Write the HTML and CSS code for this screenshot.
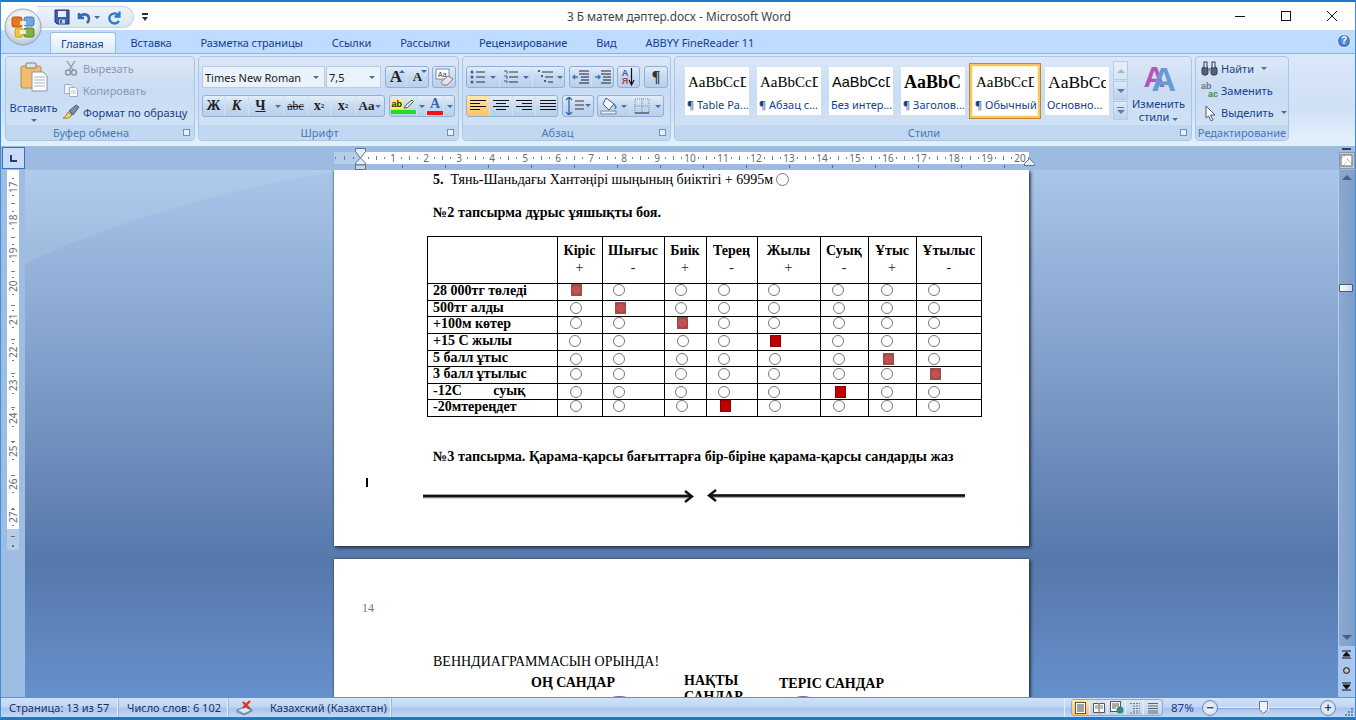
FILE: index.html
```html
<!DOCTYPE html>
<html lang="ru">
<head>
<meta charset="utf-8">
<title>3 Б матем дәптер.docx - Microsoft Word</title>
<link rel="stylesheet" href="styles.css">
</head>
<body>
<div class="app">
  <header class="titlebar">
    <div class="office-btn">
      <svg width="38" height="38" viewBox="0 0 38 38">
        <defs><radialGradient id="pearl" cx=".5" cy=".35" r=".7"><stop offset="0" stop-color="#fff"/><stop offset=".6" stop-color="#e3e9f1"/><stop offset="1" stop-color="#aab6c6"/></radialGradient></defs>
        <circle cx="19" cy="19" r="18" fill="url(#pearl)" stroke="#93a2b6"/>
        <rect x="8" y="9" width="10" height="10" rx="2" fill="#e8761c" stroke="#b94f10"/>
        <rect x="20" y="9" width="10" height="9" rx="2" fill="#6fa8dc" stroke="#3f77b5"/>
        <rect x="11" y="20" width="8" height="9" rx="2" fill="#f3c548" stroke="#cf9a1c"/>
        <rect x="20" y="20" width="10" height="9" rx="2" fill="#7fb04a" stroke="#4e8427"/>
        <rect x="16" y="13" width="6" height="4" fill="#fff" opacity=".8"/>
        <rect x="16" y="22" width="6" height="4" fill="#fff" opacity=".8"/>
      </svg>
    </div>
    <div class="title-left">
      <div class="qat">
        <svg width="16" height="16" viewBox="0 0 16 16"><path d="M1 1h14v14H3l-2-2z" fill="#3c5da8" stroke="#26397c"/><rect x="4" y="2" width="8" height="6" fill="#e7eefb"/><rect x="5" y="10.500" width="6" height="4" fill="#c8d0dc"/><rect x="6" y="11" width="2" height="3" fill="#3c5da8"/></svg>
        <svg class="qat-undo" width="15" height="15" viewBox="0 0 15 15"><path d="M3 3v5h5M3.500 7.500C6 3 12 3.500 13 8c.3 2-.6 3.500-2 5" fill="none" stroke="#2f6cb5" stroke-width="2.600"/></svg>
        <span class="caret qat-caret"></span>
        <svg class="qat-redo" width="15" height="15" viewBox="0 0 15 15"><path d="M12.500 1.500v5h-5M12 6C10 2.500 5.500 2.500 3.200 5.500 1 9 3.500 13.500 7.500 13.500c2 0 3.500-1 4.500-2.500" fill="none" stroke="#2f7ac5" stroke-width="2.300"/></svg>
      </div>
      <svg class="qat-more" width="7" height="9" viewBox="0 0 7 9"><rect x="0" y="0" width="6" height="2" fill="#20304a"/><path d="M0 4h6L3 8z" fill="#20304a"/></svg>
    </div>
    <div class="title-text">3 Б матем дәптер.docx - Microsoft Word</div>
    <div class="win-btns">
      <svg width="12" height="12" viewBox="0 0 12 12"><path d="M1 6.500h10" stroke="#111" fill="none"/></svg>
      <svg width="12" height="12" viewBox="0 0 12 12"><rect x="1.500" y="1.500" width="9" height="9" fill="none" stroke="#111"/></svg>
      <svg width="12" height="12" viewBox="0 0 12 12"><path d="M1 1l10 10M11 1L1 11" stroke="#111" fill="none"/></svg>
    </div>
  </header>

  <nav class="tabs">
    <span class="tab tab-active">Главная</span>
    <span class="tab">Вставка</span>
    <span class="tab">Разметка страницы</span>
    <span class="tab">Ссылки</span>
    <span class="tab">Рассылки</span>
    <span class="tab">Рецензирование</span>
    <span class="tab">Вид</span>
    <span class="tab">ABBYY FineReader 11</span>
    <span class="help">?</span>
  </nav>

  <section class="ribbon">
    <div class="group g-clip">
      <div class="group-body clip-body">
        <div class="paste">
          <svg width="28" height="30" viewBox="0 0 28 30"><rect x="1" y="4" width="20" height="22" rx="2" fill="#f0bd6c" stroke="#b68a45"/><rect x="6" y="1" width="10" height="5" rx="1" fill="#e3e3e3" stroke="#7b7b7b"/><path d="M12 10h11l4 4v15H12z" fill="#fff" stroke="#8794a8"/><path d="M14 15h11M14 18h11M14 21h11M14 24h11" stroke="#a9b4c4"/></svg>
          <span class="paste-label">Вставить</span>
          <span class="caret"></span>
        </div>
        <div class="clip-list">
          <div class="clip-row muted">
            <svg width="14" height="16" viewBox="0 0 14 16"><path d="M3 1l6 9M11 1L5 10" stroke="#9aa6b6" stroke-width="1.500" fill="none"/><circle cx="4" cy="12.500" r="2.500" fill="none" stroke="#8c99ab" stroke-width="1.500"/><circle cx="10" cy="12.500" r="2.500" fill="none" stroke="#8c99ab" stroke-width="1.500"/></svg>
            <span>Вырезать</span>
          </div>
          <div class="clip-row muted">
            <svg width="16" height="14" viewBox="0 0 16 14"><path d="M1.500 1.500h6l2 2v7h-8z" fill="#eef2f8" stroke="#a4aebd"/><path d="M6.500 4.500h6l2 2v7h-8z" fill="#fff" stroke="#a4aebd"/><path d="M8 8h5M8 10h5" stroke="#b9c2cf"/></svg>
            <span>Копировать</span>
          </div>
          <div class="clip-row">
            <svg width="18" height="16" viewBox="0 0 18 16"><path d="M1 14c3-1 4-4 5-6l4 3c-2 3-5 4-9 3z" fill="#f2d27a" stroke="#9b7d2d"/><path d="M7 7l7-6 3 2-6 8z" fill="#7b8da8" stroke="#4c5b72"/></svg>
            <span>Формат по образцу</span>
          </div>
        </div>
      </div>
      <div class="group-label">Буфер обмена<span class="launcher"></span></div>
    </div>

    <div class="group g-font">
      <div class="group-body rows">
        <div class="tool-row">
          <div class="combo combo-font"><span>Times New Roman</span><span class="caret"></span></div>
          <div class="combo combo-size"><span>7,5</span><span class="caret"></span></div>
          <div class="btn-group grow-group">
            <span class="btn serif-b big-a">A<i class="up"></i></span>
            <span class="btn serif-b small-a">A<i class="down"></i></span>
          </div>
          <div class="btn-group solo clear-btn">
            <svg width="20" height="18" viewBox="0 0 20 18"><rect x="2" y="1" width="13" height="10" fill="#fff" stroke="#7c8ba0"/><text x="4" y="9" class="svg-mini">Aa</text><path d="M7 14l7-6 5 3-6 6H9z" fill="#f3e0e4" stroke="#8b7a80"/></svg>
          </div>
        </div>
        <div class="tool-row row-two">
          <div class="btn-group fmt-group">
            <span class="btn serif-b w22">Ж</span>
            <span class="btn serif-b ital w24">К</span>
            <span class="btn serif-b under w23">Ч</span>
            <span class="btn w12"><span class="caret"></span></span>
            <span class="btn serif strike w24">abc</span>
            <span class="btn serif-b w23">x<sub>2</sub></span>
            <span class="btn serif-b w25">x<sup>2</sup></span>
            <span class="btn serif-b aa">Aa<span class="caret"></span></span>
          </div>
          <div class="btn-group color-group">
            <span class="btn hl">
              <span class="hl-top"><span class="hl-ab">ab</span><svg width="11" height="10" viewBox="0 0 11 10"><path d="M1 9l2-3 6-5 1.500 1.500-6 6z" fill="#f5f5f5" stroke="#555"/></svg></span>
              <span class="bar bar-g"></span>
            </span>
            <span class="btn w10"><span class="caret"></span></span>
            <span class="btn colora"><span class="colora-a">A</span><span class="bar bar-r"></span></span>
            <span class="btn w12"><span class="caret"></span></span>
          </div>
        </div>
      </div>
      <div class="group-label">Шрифт<span class="launcher"></span></div>
    </div>

    <div class="group g-para">
      <div class="group-body rows">
        <div class="tool-row">
          <div class="btn-group list-group">
            <span class="btn w33"><svg width="26" height="14" viewBox="0 0 26 14"><g fill="#3d5d8c"><circle cx="2" cy="2" r="1.500"/><circle cx="2" cy="7" r="1.500"/><circle cx="2" cy="12" r="1.500"/></g><path d="M6 2h9M6 7h9M6 12h9" stroke="#333"/><path d="M20 6h6l-3 3z" fill="#4c6d9c"/></svg></span>
            <span class="btn w33"><svg width="26" height="14" viewBox="0 0 26 14"><path d="M1 1h3v3M1 6h3v3M1 11h3v2" fill="none" stroke="#3d5d8c"/><path d="M6 2h9M6 7h9M6 12h9" stroke="#333"/><path d="M20 6h6l-3 3z" fill="#4c6d9c"/></svg></span>
            <span class="btn w33"><svg width="26" height="14" viewBox="0 0 26 14"><path d="M1 1h2M4 6h2M7 11h2" stroke="#3d5d8c" stroke-width="2"/><path d="M5 2h11M8 7h8M11 12h5" stroke="#333"/><path d="M20 6h6l-3 3z" fill="#4c6d9c"/></svg></span>
          </div>
          <div class="btn-group indent-group">
            <span class="btn w22"><svg width="18" height="14" viewBox="0 0 18 14"><path d="M7 1h10M7 4h10M9 7h8M9 10h8M7 13h10" stroke="#222"/><path d="M6 7H1M3 5L1 7l2 2" stroke="#3a7ac0" fill="none" stroke-width="1.500"/></svg></span>
            <span class="btn w22"><svg width="18" height="14" viewBox="0 0 18 14"><path d="M7 1h10M7 4h10M9 7h8M9 10h8M7 13h10" stroke="#222"/><path d="M1 7h5M4 5l2 2-2 2" stroke="#3a7ac0" fill="none" stroke-width="1.500"/></svg></span>
          </div>
          <div class="btn-group solo sort-btn">
            <span class="sort-az"><b class="az-a">А</b><b class="az-b">Я</b></span>
            <svg width="7" height="18" viewBox="0 0 7 18"><path d="M3.500 0v16M1 12l2.500 5L6 12" stroke="#111" fill="none" stroke-width="1.200"/></svg>
          </div>
          <div class="btn-group solo pil-btn">¶</div>
        </div>
        <div class="tool-row row-two">
          <div class="btn-group align-group">
            <span class="btn act"><svg width="16" height="12" viewBox="0 0 16 12"><path d="M0 .5h16M0 3.500h10M0 6.500h16M0 9.500h10" stroke="#111"/></svg></span>
            <span class="btn"><svg width="16" height="12" viewBox="0 0 16 12"><path d="M0 .5h16M3 3.500h10M0 6.500h16M3 9.500h10" stroke="#111"/></svg></span>
            <span class="btn"><svg width="16" height="12" viewBox="0 0 16 12"><path d="M0 .5h16M6 3.500h10M0 6.500h16M6 9.500h10" stroke="#111"/></svg></span>
            <span class="btn"><svg width="16" height="12" viewBox="0 0 16 12"><path d="M0 .5h16M0 3.500h16M0 6.500h16M0 9.500h16" stroke="#111"/></svg></span>
          </div>
          <div class="btn-group spacing-group">
            <svg width="26" height="18" viewBox="0 0 26 18"><path d="M4 0v18M1 3l3-3 3 3M1 15l3 3 3-3" stroke="#2f62a8" fill="none" stroke-width="1.300"/><path d="M10 4h9M10 8h9M10 12h9" stroke="#333"/><path d="M20 7h6l-3 3z" fill="#4c6d9c"/></svg>
          </div>
          <div class="btn-group shade-group">
            <span class="btn w33"><svg width="28" height="18" viewBox="0 0 28 18"><path d="M6 1l8 6-5 6-6-6z" fill="#f3f6fb" stroke="#44597a"/><path d="M14 7c2 2 2 4 1 5" stroke="#3d87cc" fill="none" stroke-width="1.500"/><rect x="1" y="14" width="15" height="3" fill="#e9eef5" stroke="#7d8794"/><path d="M21 8h6l-3 3z" fill="#4c6d9c"/></svg></span>
            <span class="btn w33"><svg width="28" height="16" viewBox="0 0 28 16"><path d="M1 1h14v14H1zM8 1v14M1 8h14" fill="none" stroke="#78869b" stroke-dasharray="1 1"/><path d="M1 15h14" stroke="#333"/><path d="M21 7h6l-3 3z" fill="#4c6d9c"/></svg></span>
          </div>
        </div>
      </div>
      <div class="group-label">Абзац<span class="launcher"></span></div>
    </div>

    <div class="group g-styles">
      <div class="group-body styles-body">
        <div class="style-list">
          <div class="style-card"><span class="sample s-times">AaBbCcDc</span><span class="style-name">¶ Table Pa...</span></div>
          <div class="style-card"><span class="sample s-times">AaBbCcDc</span><span class="style-name">¶ Абзац с...</span></div>
          <div class="style-card"><span class="sample s-sans">AaBbCcDc</span><span class="style-name">Без интер...</span></div>
          <div class="style-card"><span class="sample s-bold">AaBbC</span><span class="style-name">¶ Заголов...</span></div>
          <div class="style-card style-sel"><span class="sample s-times">AaBbCcDc</span><span class="style-name">¶ Обычный</span></div>
          <div class="style-card"><span class="sample s-big">AaBbCcDc</span><span class="style-name">Основно...</span></div>
        </div>
        <div class="style-scroll">
          <span class="scroll-btn sb-up"></span>
          <span class="scroll-btn sb-down"></span>
          <span class="scroll-btn sb-more"></span>
        </div>
        <div class="change-styles">
          <span class="letters"><span class="la">A</span><span class="lb">A</span></span>
          <span class="cs-line">Изменить</span>
          <span class="cs-line">стили <span class="caret"></span></span>
        </div>
      </div>
      <div class="group-label">Стили<span class="launcher"></span></div>
    </div>

    <div class="group g-edit">
      <div class="group-body edit-list">
        <div class="edit-row">
          <svg width="17" height="15" viewBox="0 0 17 15"><rect x="1" y="6" width="6" height="8" rx="2" fill="#55647c" stroke="#2c3a52"/><rect x="10" y="6" width="6" height="8" rx="2" fill="#55647c" stroke="#2c3a52"/><rect x="3" y="1" width="3" height="6" fill="#dbe4f0" stroke="#2c3a52"/><rect x="11" y="1" width="3" height="6" fill="#dbe4f0" stroke="#2c3a52"/><rect x="7" y="7" width="3" height="3" fill="#8293ac"/></svg>
          <span>Найти</span><span class="caret"></span>
        </div>
        <div class="edit-row">
          <span class="replace-ico"><b class="ab">ab</b><b class="ac">ac</b></span>
          <span>Заменить</span>
        </div>
        <div class="edit-row">
          <svg width="17" height="17" viewBox="0 0 17 17"><path d="M5 2l9 9H9.500l2.500 5-2 1-2.500-5L5 14z" fill="#fff" stroke="#4e5c70"/></svg>
          <span>Выделить</span><span class="caret"></span>
        </div>
      </div>
      <div class="group-label label-plain">Редактирование</div>
    </div>
  </section>

  <div class="ruler-row">
    <div class="tab-box"><span class="tab-l"></span></div>
    <div class="hruler">
      <div class="hr-dark"></div>
      <div class="hr-white">
        <span>1</span><span>2</span><span>3</span><span>4</span><span>5</span><span>6</span><span>7</span><span>8</span><span>9</span><span>10</span><span>11</span><span>12</span><span>13</span><span>14</span><span>15</span><span>16</span><span>17</span><span>18</span><span>19</span><span>20</span>
      </div>
      <svg class="indent-mark" width="11" height="22" viewBox="0 0 11 22"><path d="M.5.5h10v3L5.500 10 .5 3.500z" fill="#e4edf8" stroke="#5a7496"/><path d="M5.500 10l5 5v2H.500v-2z" fill="#e4edf8" stroke="#5a7496"/><rect x=".5" y="17" width="10" height="4.500" fill="#c5d6ea" stroke="#5a7496"/></svg>
      <svg class="right-mark" width="11" height="8" viewBox="0 0 11 8"><path d="M.5 7.500h10v-2l-5-5-5 5z" fill="#e4edf8" stroke="#5a7496"/></svg>
    </div>
    <div class="view-ruler">
      <span class="vr-dash"></span>
      <span class="vr-btn"><svg width="13" height="13" viewBox="0 0 13 13"><rect x="1" y="1" width="11" height="11" fill="#fff" stroke="#66707e"/><path d="M1 4l4-3M3 12l4-4M7 5l5 5" stroke="#66707e" stroke-dasharray="1 1"/></svg></span>
    </div>
  </div>

  <main class="main">
    <aside class="vruler">
      <div class="vr-white">
        <span>17</span><span>18</span><span>19</span><span>20</span><span>21</span><span>22</span><span>23</span><span>24</span><span>25</span><span>26</span><span>27</span>
      </div>
      <div class="vr-dark"></div>
    </aside>

    <div class="doc">
      <svg class="swoosh" width="330" height="110" viewBox="0 0 330 110"><path d="M0 0h330C230 10 90 50 0 94z" fill="#fff" opacity=".09"/></svg>
      <article class="page page-one">
        <p class="line"><b>5.</b>&nbsp; Тянь-Шаньдағы Хантәңірі шыңының биіктігі + 6995м<span class="inline-mark"></span></p>
        <p class="line bold gap-a">№2 тапсырма дұрыс ұяшықты боя.</p>
        <table class="task">
          <colgroup><col class="c0"><col class="c1"><col class="c2"><col class="c3"><col class="c4"><col class="c5"><col class="c6"><col class="c7"><col class="c8"></colgroup>
          <tr class="head"><th></th><th>Кіріс<br><i>+</i></th><th>Шығыс<br><i>-</i></th><th>Биік<br><i>+</i></th><th>Терең<br><i>-</i></th><th>Жылы<br><i>+</i></th><th>Суық<br><i>-</i></th><th>Ұтыс<br><i>+</i></th><th>Ұтылыс<br><i>-</i></th></tr>
          <tr class="h17 p0"><td>28 000тг төледі</td><td><span class="mark red n1"></span></td><td><span class="mark"></span></td><td><span class="mark"></span></td><td><span class="mark"></span></td><td><span class="mark"></span></td><td><span class="mark n-1"></span></td><td><span class="mark"></span></td><td><span class="mark"></span></td></tr>
          <tr class="h16 p1"><td>500тг алды</td><td><span class="mark"></span></td><td><span class="mark red n2"></span></td><td><span class="mark"></span></td><td><span class="mark"></span></td><td><span class="mark"></span></td><td><span class="mark"></span></td><td><span class="mark"></span></td><td><span class="mark"></span></td></tr>
          <tr class="h17 p0"><td>+100м көтер</td><td><span class="mark"></span></td><td><span class="mark"></span></td><td><span class="mark red n2"></span></td><td><span class="mark"></span></td><td><span class="mark"></span></td><td><span class="mark"></span></td><td><span class="mark"></span></td><td><span class="mark"></span></td></tr>
          <tr class="h17 p1"><td>+15 С жылы</td><td><span class="mark n-1"></span></td><td><span class="mark"></span></td><td><span class="mark n2"></span></td><td><span class="mark"></span></td><td><span class="mark solid n2"></span></td><td><span class="mark n-1"></span></td><td><span class="mark"></span></td><td><span class="mark"></span></td></tr>
          <tr class="h16 p2"><td>5 балл ұтыс</td><td><span class="mark"></span></td><td><span class="mark"></span></td><td><span class="mark n1"></span></td><td><span class="mark"></span></td><td><span class="mark n1"></span></td><td><span class="mark"></span></td><td><span class="mark red n2"></span></td><td><span class="mark"></span></td></tr>
          <tr class="h17 p1"><td>3 балл ұтылыс</td><td><span class="mark"></span></td><td><span class="mark"></span></td><td><span class="mark"></span></td><td><span class="mark"></span></td><td><span class="mark"></span></td><td><span class="mark"></span></td><td><span class="mark"></span></td><td><span class="mark red n2"></span></td></tr>
          <tr class="h16 p2"><td class="pre">-12С         суық</td><td><span class="mark"></span></td><td><span class="mark"></span></td><td><span class="mark"></span></td><td><span class="mark"></span></td><td><span class="mark"></span></td><td><span class="mark solid n2"></span></td><td><span class="mark"></span></td><td><span class="mark"></span></td></tr>
          <tr class="h17 p0"><td>-20мтереңдет</td><td><span class="mark"></span></td><td><span class="mark"></span></td><td><span class="mark n1"></span></td><td><span class="mark solid n2"></span></td><td><span class="mark n1"></span></td><td><span class="mark"></span></td><td><span class="mark"></span></td><td><span class="mark"></span></td></tr>
        </table>
        <p class="line bold gap-b">№3 тапсырма. Қарама-қарсы бағыттарға бір-біріне қарама-қарсы сандарды жаз</p>
        <div class="arrows">
          <svg width="272" height="14" viewBox="0 0 272 14"><path d="M0 7.500h268" stroke="#aaa" stroke-width="4"/><path d="M0 7h268" stroke="#111" stroke-width="2.500"/><path d="M262 2l7 5.500-7 5.500" fill="none" stroke="#111" stroke-width="2.400"/></svg>
          <svg width="258" height="14" viewBox="0 0 258 14"><path d="M3 7h255" stroke="#aaa" stroke-width="4"/><path d="M3 6.500h255" stroke="#111" stroke-width="2.500"/><path d="M9 1L2 6.500 9 12" fill="none" stroke="#111" stroke-width="2.400"/></svg>
        </div>
        <span class="caret-cursor"></span>
      </article>
      <article class="page page-two">
        <p class="page-num">14</p>
        <p class="line venn">ВЕННДИАГРАММАСЫН ОРЫНДА!</p>
        <div class="venn-heads">
          <span class="vh-a">ОҢ САНДАР</span>
          <span class="vh-b">НАҚТЫ САНДАР</span>
          <span class="vh-c">ТЕРІС САНДАР</span>
        </div>
        <span class="blob blob-a"></span>
        <span class="blob blob-b"></span>
      </article>
    </div>

    <aside class="vscroll">
      <div class="track">
        <span class="arrow-up"></span>
        <span class="thumb"></span>
        <span class="arrow-down"></span>
      </div>
      <div class="browse">
        <svg width="9" height="9" viewBox="0 0 9 9"><path d="M0 1h9M4.500 2L1 6h7zM0 8h9" stroke="#111" fill="#111"/></svg>
        <span class="browse-dot"></span>
        <svg width="9" height="9" viewBox="0 0 9 9"><path d="M0 1h9M1 3h7L4.500 7zM0 8h9" stroke="#111" fill="#111"/></svg>
      </div>
    </aside>
  </main>

  <footer class="status">
    <span class="st st-a">Страница: 13 из 57</span>
    <span class="st st-b">Число слов: 6 102</span>
    <span class="st st-c">
      <svg width="17" height="16" viewBox="0 0 17 16"><path d="M1 10l8-3 7 3-8 4z" fill="#dce6f4" stroke="#5e7da8"/><path d="M1 10v2l7 3 8-4v-1" fill="none" stroke="#5e7da8"/><path d="M7 2l7 7M14 1L7 8" stroke="#e1341c" stroke-width="2.400"/></svg>
    </span>
    <span class="st st-d">Казахский (Казахстан)</span>
    <span class="st-fill"></span>
    <div class="st-right">
      <div class="views">
        <span class="view view-act"><svg width="11" height="12" viewBox="0 0 11 12"><rect x=".5" y=".5" width="10" height="11" fill="#fff" stroke="#555"/><path d="M2 3h7M2 5h7M2 7h7M2 9h7" stroke="#444"/></svg></span>
        <span class="view"><svg width="12" height="12" viewBox="0 0 12 12"><path d="M.5 1.500h5l.5 1 .5-1h5v9h-5l-.5 1-.5-1h-5zM6 2.500v8" fill="#fff" stroke="#555"/><path d="M2 4h3M2 6h3M7 4h3M7 6h3" stroke="#777"/></svg></span>
        <span class="view"><svg width="14" height="13" viewBox="0 0 14 13"><rect x=".5" y=".5" width="10" height="10" fill="#fff" stroke="#555"/><path d="M2 3h7M2 5h7M2 7h4" stroke="#555"/><circle cx="10" cy="9" r="3.500" fill="#2f8a7c"/></svg></span>
        <span class="view"><svg width="12" height="12" viewBox="0 0 12 12"><path d="M1 1.500h10M4 4h7M4 6.500h7M4 9h7M1 11h10" stroke="#777" stroke-dasharray="2 1"/></svg></span>
        <span class="view"><svg width="12" height="12" viewBox="0 0 12 12"><path d="M1 1.500h10M1 4h10M1 6.500h10M1 9h10M1 11h10" stroke="#666"/></svg></span>
      </div>
      <span class="zoom-val">87%</span>
      <div class="zoom-ctl">
        <span class="round-btn">−</span>
        <span class="slider"><span class="tick"></span><svg class="knob" width="9" height="13" viewBox="0 0 9 13"><path d="M.5.5h8v8l-4 4-4-4z" fill="#eef3fb" stroke="#5d7ba5"/></svg></span>
        <span class="round-btn">+</span>
      </div>
      <svg class="grip" width="8" height="8" viewBox="0 0 8 8"><g fill="#6c8ab4"><rect x="6" y="0" width="2" height="2"/><rect x="3" y="3" width="2" height="2"/><rect x="6" y="3" width="2" height="2"/><rect x="0" y="6" width="2" height="2"/><rect x="3" y="6" width="2" height="2"/><rect x="6" y="6" width="2" height="2"/></g></svg>
    </div>
  </footer>
</div>
</body>
</html>
```
FILE: styles.css
```css
* { box-sizing: border-box; }
html, body { margin: 0; padding: 0; }
body { width: 1356px; height: 720px; overflow: hidden; font-family: "Noto Sans", "Open Sans", sans-serif; font-size: 11px; color: #15428b; }
p { margin: 0; }

.app { width: 1356px; height: 720px; display: flex; flex-direction: column; border-top: 2px solid #1a7acb; border-bottom: 3px solid #1a7acb; border-left: 1px solid #3a8fdd; border-right: 1px solid #3a8fdd; position: relative; overflow: hidden; }

/* title bar */
.titlebar { height: 28px; background: #fff; display: flex; align-items: center; flex: none; position: relative; }
.office-btn { position: absolute; left: 3px; top: 6px; z-index: 5; width: 38px; height: 38px; }
.title-left { flex: 1; display: flex; align-items: center; padding-left: 36px; padding-top: 2px; }
.qat { width: 97px; height: 22px; border: 1px solid #c6d4e6; border-left: 0; border-radius: 0 11px 11px 0; background: linear-gradient(#eef3fa, #dbe6f4); display: flex; align-items: center; padding-left: 17px; }
.qat-undo { margin-left: 6px; }
.qat-caret { margin-left: 3px; }
.qat-redo { margin-left: 7px; }
.qat-more { margin-left: 8px; }
.title-text { font-size: 11.800px; color: #444; white-space: nowrap; margin-right: 17px; padding-bottom: 1px; }
.win-btns { flex: 1; display: flex; justify-content: flex-end; gap: 34px; padding-right: 17px; padding-bottom: 1px; }

/* tabs */
.tabs { height: 23px; flex: none; background: #bfdbff; display: flex; align-items: flex-end; padding-left: 49px; position: relative; font-size: 11px; }
.tab { padding: 0 14.500px; height: 21px; line-height: 21px; white-space: nowrap; letter-spacing: -.1px; }
.tab-active { background: linear-gradient(#fbfdff, #dbe8f8); border: 1px solid #9abde6; border-bottom: 0; border-radius: 3px 3px 0 0; padding: 0 10px; width: 66px; }
.help { position: absolute; right: 4px; top: 4px; width: 14px; height: 14px; border-radius: 50%; background: radial-gradient(#6ea3e6, #1f5cb5); border: 1px solid #e7f0fb; color: #fff; font: bold 10px/12px "Liberation Sans", sans-serif; text-align: center; }

/* ribbon */
.ribbon { height: 93px; flex: none; background: linear-gradient(#dbe8fa, #cfe0f6 60%, #e2eefb 95%); border-top: 1px solid #8db2e3; border-bottom: 3px solid #dff2fb; display: flex; gap: 3px; padding: 2px 0 0 4px; }
.group { height: 85px; display: flex; flex-direction: column; border: 1px solid #a9c5e7; border-radius: 4px; background: linear-gradient(#dce8f7, #c9dcf3 40%, #d3e3f6); flex: none; overflow: hidden; }
.group-body { height: 68px; flex: none; }
.group-label { height: 15px; background: #c1d8f1; color: #4b78b2; text-align: center; font-size: 11px; line-height: 15px; position: relative; padding-right: 18px; white-space: nowrap; }
.label-plain { padding-right: 0; }
.launcher { position: absolute; right: 4px; top: 4px; width: 7px; height: 7px; border: 1px solid #6d8fbb; background: #e8f0fa; }
.caret { display: inline-block; width: 0; height: 0; border-left: 3px solid transparent; border-right: 3px solid transparent; border-top: 3px solid #4c6d9c; }

.g-clip { width: 190px; }
.clip-body { display: flex; }
.paste { width: 55px; display: flex; flex-direction: column; align-items: center; padding-top: 5px; }
.paste-label { margin-top: 8px; line-height: 15px; }
.paste .caret { margin-top: 4px; }
.clip-list { display: flex; flex-direction: column; padding-left: 1px; }
.clip-row { height: 22px; display: flex; align-items: center; gap: 3px; white-space: nowrap; }
.clip-row svg { width: 18px; margin-right: 0; }
.muted { color: #8c9aae; }

.g-font { width: 261px; }
.g-para { width: 209px; }
.rows { padding: 9px 0 0 3px; }
.tool-row { display: flex; height: 22px; }
.row-two { margin-top: 7px; }
.combo { height: 22px; background: #eaf2fc; border: 1px solid #b7cce6; display: flex; align-items: center; justify-content: space-between; padding: 0 5px 0 2px; color: #1b1b1b; font-size: 11px; white-space: nowrap; }
.combo-font { width: 123px; }
.combo-size { width: 55px; margin-left: 1px; }
.btn-group { height: 22px; border: 1px solid #8fb0d8; border-radius: 3px; background: linear-gradient(#e2edf9, #c5d9f1 50%, #b9d0ec); display: flex; align-items: center; }
.btn { height: 20px; display: flex; align-items: center; justify-content: center; color: #222; border-right: 1px solid #d2e0f2; flex: none; }
.btn:last-child { border-right: 0; }
.solo { justify-content: center; }
.serif-b { font: bold 14px "Liberation Serif", serif; }
.serif { font: 12px "Liberation Serif", serif; }
.ital { font-style: italic; }
.under { text-decoration: underline; }
.strike { text-decoration: line-through; }
.btn sub, .btn sup { font-size: 7px; line-height: 0; }
.w10 { width: 10px; } .w12 { width: 12px; } .w22 { width: 22px; } .w23 { width: 23px; } .w24 { width: 24px; } .w25 { width: 25px; } .w33 { width: 33px; }
.grow-group { width: 44px; margin-left: 4px; }
.grow-group .btn { width: 21px; position: relative; }
.big-a { font-size: 17px; }
.small-a { font-size: 13px; }
.up, .down { position: absolute; right: 1px; top: 3px; width: 0; height: 0; border-left: 3px solid transparent; border-right: 3px solid transparent; }
.up { border-bottom: 3px solid #3a69a8; }
.down { border-top: 3px solid #3a69a8; }
.clear-btn { width: 24px; margin-left: 3px; }
.svg-mini { font: 7px "Liberation Sans", sans-serif; fill: #333; }
.fmt-group { width: 183px; }
.fmt-group .btn:nth-child(3) { border-right: 0; }
.aa { flex: 1; gap: 1px; font-size: 13px; }
.color-group { width: 66px; margin-left: 4px; }
.hl { width: 27px; flex-direction: column; gap: 0; }
.hl-top { display: flex; width: 25px; align-items: center; }
.hl-ab { background: #fff34d; font: bold 9px/10px "Liberation Sans", sans-serif; color: #222; padding: 0 1px; }
.bar { display: block; width: 16px; height: 4px; margin-top: 1px; }
.bar-g { background: #1fe01f; width: 25px; }
.bar-r { background: #f01414; }
.colora { width: 17px; flex-direction: column; }
.colora-a { font: bold 14px/13px "Liberation Serif", serif; color: #3a62a8; }

.list-group { width: 99px; }
.indent-group { width: 45px; margin-left: 4px; }
.sort-btn { width: 23px; margin-left: 3px; gap: 0; }
.sort-az { display: flex; flex-direction: column; font: 9px/8px "Liberation Sans", sans-serif; }
.az-a { color: #2f62a8; }
.az-b { color: #a8443a; }
.pil-btn { width: 24px; margin-left: 4px; font: bold 16px "Liberation Serif", serif; color: #333; }
.align-group { width: 92px; }
.align-group .btn { width: 23px; }
.act { background: linear-gradient(#ffe9a8, #fcc35e); border-radius: 2px 0 0 2px; }
.spacing-group { width: 32px; margin-left: 4px; justify-content: center; }
.shade-group { width: 67px; margin-left: 3px; }

.g-styles { width: 518px; }
.styles-body { display: flex; padding: 0; }
.style-list { display: flex; gap: 8px; padding: 10px 0 0 10px; }
.style-card { width: 64px; height: 48px; background: #fff; display: flex; flex-direction: column; overflow: hidden; align-items: flex-start; }
.sample { display: block; width: 58px; height: 30px; color: #000; overflow: hidden; white-space: nowrap; margin-left: 3px; }
.s-times { font: 15px/31px "Liberation Serif", serif; }
.s-sans { font: 14.500px/31px "Liberation Sans", sans-serif; }
.s-bold { font: bold 18px/31px "Liberation Serif", serif; }
.s-big { font: 17.500px/31px "Liberation Serif", serif; }
.style-name { font-size: 11px; line-height: 16px; padding-left: 2px; white-space: nowrap; }
.style-sel { box-shadow: 0 0 0 1px #fff4c8, 0 0 0 3px #fcc35e, 0 0 0 4px #b98a3e; }
.style-scroll { width: 15px; margin: 4px 0 0 4px; display: flex; flex-direction: column; gap: 1px; }
.scroll-btn { height: 19px; border: 1px solid #b3cbe8; background: linear-gradient(#dce8f7, #bcd2ec); position: relative; display: block; }
.sb-up { background: linear-gradient(#e8eff9, #d9e5f4); }
.sb-up::after, .sb-down::after, .sb-more::after { content: ""; position: absolute; left: 3px; top: 7px; border-left: 4px solid transparent; border-right: 4px solid transparent; }
.sb-up::after { border-bottom: 4px solid #a9b8cc; }
.sb-down::after { border-top: 4px solid #5a7ba8; }
.sb-more::after { border-top: 4px solid #5a7ba8; top: 8px; }
.sb-more::before { content: ""; position: absolute; left: 3px; top: 5px; width: 7px; height: 1px; background: #5a7ba8; }
.change-styles { width: 60px; display: flex; flex-direction: column; align-items: center; padding-left: 1px; }
.letters { position: relative; width: 32px; height: 37px; font: bold 34px/34px "Liberation Sans", sans-serif; display: block; margin-top: 3px; }
.la { color: #b656b4; position: absolute; left: 1px; top: 0; font-size: 30px; }
.lb { color: #6a9ad6; position: absolute; left: 9px; top: 2px; }
.cs-line { line-height: 13px; white-space: nowrap; }
.g-edit { width: 94px; }
.edit-list { display: flex; flex-direction: column; padding: 0 0 0 5px; }
.edit-row { height: 22px; display: flex; align-items: center; gap: 3px; white-space: nowrap; }
.edit-row svg, .replace-ico { width: 17px; flex: none; }
.edit-row .caret { margin-left: 4px; }
.replace-ico { display: flex; flex-direction: column; font: bold 9px/8px "Liberation Sans", sans-serif; }
.ab { color: #6b7686; }
.ac { color: #3f8f3f; align-self: flex-end; }

/* rulers */
.ruler-row { height: 24px; flex: none; background: #9dbbe0; display: flex; position: relative; }
.tab-box { width: 23px; height: 22px; margin: 1px 0 0 1px; border: 1px solid #3d6fc0; background: #c9dcf3; display: flex; align-items: center; justify-content: center; }
.tab-l { width: 7px; height: 7px; border-left: 2px solid #1e3d7a; border-bottom: 2px solid #1e3d7a; }
.hruler { width: 695px; height: 12px; margin: 6px 0 0 309px; display: flex; position: relative; }
.hr-dark { width: 26px; background-color: #b6cdea; background-image: linear-gradient(#6f7f92, #6f7f92), linear-gradient(#6f7f92, #6f7f92), linear-gradient(#6f7f92, #6f7f92); background-position: 1px 5px, 10px 4px, 19px 5px; background-size: 1px 2px, 1px 4px, 1px 2px; background-repeat: no-repeat; }
.hr-white { width: 669px; background-color: #fff; padding-left: 16.500px; display: flex; font: 10px/12px "Noto Sans", sans-serif; color: #5f6b7a; position: relative;
  background-image: repeating-linear-gradient(90deg, transparent 0 8px, #6f7f92 8px 9px, transparent 9px 33px), repeating-linear-gradient(90deg, transparent 0 16px, #6f7f92 16px 17px, transparent 17px 33px), repeating-linear-gradient(90deg, transparent 0 24px, #6f7f92 24px 25px, transparent 25px 33px);
  background-size: 100% 2px, 100% 4px, 100% 2px; background-position: 0 5px, 0 4px, 0 5px; background-repeat: no-repeat; }
.hr-white span { flex: none; text-align: center; background: #fff; margin: 0 10px; width: 13px; }
.hr-white::after { content: ""; position: absolute; left: 0; right: 0; top: 13px; height: 3px; background: repeating-linear-gradient(90deg, transparent 0 42px, #5f6f82 42px 43px); }
.indent-mark { position: absolute; left: 21px; top: -4px; }
.right-mark { position: absolute; left: 690px; top: 6px; }
.view-ruler { margin-left: auto; width: 17px; display: flex; flex-direction: column; align-items: center; }
.vr-dash { width: 9px; height: 2px; background: #2f3f5a; margin-top: 2px; }
.vr-btn { width: 16px; height: 17px; margin-top: 2px; background: #c2c9d2; border: 1px solid #8d99a8; display: flex; align-items: center; justify-content: center; }

.main { height: 527px; flex: none; display: flex; }
.vruler { width: 24px; flex: none; background: #9dbde2; padding-left: 6px; }
.vr-white { width: 12px; height: 359px; overflow: hidden; background: #fff; display: flex; flex-direction: column; align-items: center; font: 10px/12px "Noto Sans", sans-serif; color: #5f6b7a;
  background-image: repeating-linear-gradient(180deg, transparent 0 8px, #6f7f92 8px 9px, transparent 9px 33px), repeating-linear-gradient(180deg, transparent 0 25px, #6f7f92 25px 26px, transparent 26px 33px), repeating-linear-gradient(180deg, transparent 0 33px, #6f7f92 33px 34px);
  background-size: 2px 100%, 2px 100%, 4px 100%; background-position: 5px 0, 5px 0, 4px 0; background-repeat: no-repeat; }
.vr-white span { flex: none; writing-mode: vertical-rl; transform: rotate(180deg); text-align: center; width: 12px; height: 14px; margin: 9.500px 0; background: #fff; }
.vr-dark { width: 12px; height: 21px; background-color: #b6cdea; background-image: linear-gradient(#5f6f82, #5f6f82), linear-gradient(#5f6f82, #5f6f82); background-size: 4px 1px, 2px 2px; background-position: 4px 7px, 5px 16px; background-repeat: no-repeat; }

.doc { flex: 1; position: relative; overflow: hidden; background: linear-gradient(180deg, #a9c6ea 0, #8aa8d1 150px, #5678ab 390px, #6690cc 527px); display: flex; flex-direction: column; align-items: center; gap: 13px; }
.swoosh { position: absolute; left: 0; top: 0; }
.page { width: 695px; flex: none; background: #fff; position: relative; box-shadow: 0 0 2px #333, 2px 2px 3px rgba(20, 30, 50, .7); font: 14px/16px "Liberation Serif", serif; color: #000; }
.page-one { height: 376px; padding: 2px 0 0 99px; }
.page-two { height: 160px; padding: 41px 0 0 28px; }
.line { white-space: nowrap; }
.bold { font-weight: bold; font-size: 14.200px; }
.gap-a { margin-top: 16px; }
.gap-b { margin-top: 31px; }
.inline-mark { display: inline-block; vertical-align: -2px; margin-left: 3px; width: 13px; height: 13px; border: 1px solid #777; border-radius: 50%; }

.task { border-collapse: collapse; table-layout: fixed; width: 554px; margin: 16px 0 0 -6px; font-size: 14px; line-height: 14px; }
.c0 { width: 129.500px; } .c1 { width: 45px; } .c2 { width: 62px; } .c3 { width: 42px; } .c4 { width: 51px; } .c5 { width: 63px; } .c6 { width: 48px; } .c7 { width: 48px; } .c8 { width: 65.500px; }
.task th, .task td { border: 1px solid #000; padding: 0; vertical-align: top; }
.head { height: 47px; }
.task th { padding-top: 6px; line-height: 16.500px; font-size: 14px; }
.task th i { font-style: normal; font-weight: normal; color: #223; }
.h17 { height: 17px; }
.h16 { height: 16px; }
.task td:first-child { font-weight: bold; padding: 0 0 0 5px; white-space: nowrap; line-height: 14px; overflow: hidden; }
.pre { white-space: pre !important; }
.mark { display: block; width: 12px; height: 12px; border: 1px solid #777; border-radius: 50%; background: #fff; }
.task td:nth-child(2) { padding-left: 12px; }
.task td:nth-child(3) { padding-left: 10px; }
.task td:nth-child(4) { padding-left: 10px; }
.task td:nth-child(5) { padding-left: 11px; }
.task td:nth-child(6) { padding-left: 10px; }
.task td:nth-child(7) { padding-left: 12px; }
.task td:nth-child(8) { padding-left: 12px; }
.task td:nth-child(9) { padding-left: 11px; }
.p1 td:not(:first-child) { padding-top: 1px; }
.p2 td:not(:first-child) { padding-top: 2px; }
.n-1 { margin-left: -1px; }
.n1 { margin-left: 1px; }
.n2 { margin-left: 2px; }
.red { border-radius: 0; border: 0; width: 11px; height: 12px; background: radial-gradient(circle at 50% 50%, #c2514f 0 4.300px, #8c4c4a 4.800px 5.400px, #a8504e 5.800px); }
.solid { border-radius: 0; width: 11px; background: #c00000; border: 1px solid #8f0000; }

.arrows { display: flex; gap: 12px; margin: 25px 0 0 -10px; }
.caret-cursor { position: absolute; left: 32px; top: 308px; width: 2px; height: 9px; background: #000; }
.page-num { color: #777; font-size: 12px; }
.venn { margin: 38px 0 0 71px; }
.venn-heads { display: flex; align-items: flex-start; margin: 5px 0 0 169px; font-weight: bold; line-height: 16px; }
.vh-a { width: 153px; white-space: nowrap; }
.vh-b { width: 95px; margin-top: -2px; }
.vh-c { white-space: nowrap; margin-top: 1px; }
.blob { position: absolute; top: 137px; height: 20px; border-radius: 50%; background: #7a5fa6; }
.blob-a { left: 269px; width: 33px; }
.blob-b { left: 454px; width: 30px; }

/* scrollbar */
.vscroll { width: 17px; flex: none; display: flex; flex-direction: column; background: #b4cdec; }
.track { height: 476px; margin-left: 1px; background: linear-gradient(90deg, #8ba9d2, #7e9dc8); position: relative; display: flex; flex-direction: column; align-items: center; }
.arrow-up { margin-top: 5px; border-left: 5px solid transparent; border-right: 5px solid transparent; border-bottom: 5px solid #4c5f86; }
.thumb { position: absolute; top: 114px; left: 0; width: 14px; height: 8px; background: linear-gradient(90deg, #fff, #cfdcee); border: 1px solid #44587c; border-radius: 1px; }
.arrow-down { margin-top: auto; margin-bottom: 6px; border-left: 5px solid transparent; border-right: 5px solid transparent; border-top: 5px solid #4c5f86; }
.browse { flex: 1; background: #a9c7ed; display: flex; flex-direction: column; align-items: center; gap: 8px; padding-top: 4px; }
.browse-dot { width: 7px; height: 7px; border-radius: 50%; background: radial-gradient(#e8e8e8, #666); border: 1px solid #222; }

/* status bar */
.status { height: 20px; flex: none; background: linear-gradient(#d1e2f8, #c0d6f4 45%, #a9c5ee 55%, #c5d9f5); border-top: 1px solid #6f90bf; display: flex; align-items: center; color: #1c2f6b; font-size: 11px; }
.st { height: 19px; line-height: 19px; border-right: 1px solid #e3edfa; white-space: nowrap; flex: none; }
.st-a { width: 117px; padding-left: 8px; box-shadow: 1px 0 0 #9db8dc; }
.st-b { width: 110px; padding-left: 9px; box-shadow: 1px 0 0 #9db8dc; }
.st-c { width: 42px; padding-left: 8px; border-right: 0; display: flex; align-items: center; }
.st-d { width: 121px; padding-left: 0; box-shadow: 1px 0 0 #9db8dc; }
.st-fill { flex: 1; }
.st-right { display: flex; align-items: center; width: 291px; height: 19px; border-left: 1px solid #e3edfa; padding-left: 6px; position: relative; }
.views { width: 92px; height: 17px; display: flex; border: 1px solid #8fa9cc; border-radius: 3px; background: linear-gradient(#dbe7f7, #bed3ef); overflow: hidden; }
.view { width: 18px; display: flex; align-items: center; justify-content: center; border-right: 1px solid #e5eefa; }
.view:last-child { border-right: 0; }
.view-act { background: linear-gradient(#ffe7a0, #fcc35e); }
.zoom-val { width: 31px; margin-left: 8px; color: #1c3a8a; font-size: 11.500px; }
.zoom-ctl { display: flex; align-items: center; }
.round-btn { width: 16px; height: 16px; border-radius: 50%; border: 1px solid #6f8ab0; background: radial-gradient(#fafdff, #bed0ea); color: #2b4a78; font: bold 13px/13px "Liberation Sans", sans-serif; text-align: center; flex: none; }
.slider { width: 102px; height: 1px; background: #e9f1fb; position: relative; box-shadow: 0 1px 0 #8ea9ce; }
.tick { position: absolute; left: 50px; top: -3px; width: 1px; height: 7px; background: #e9f1fb; }
.knob { position: absolute; left: 41px; top: -6px; }
.grip { position: absolute; right: 2px; bottom: 1px; }
```
